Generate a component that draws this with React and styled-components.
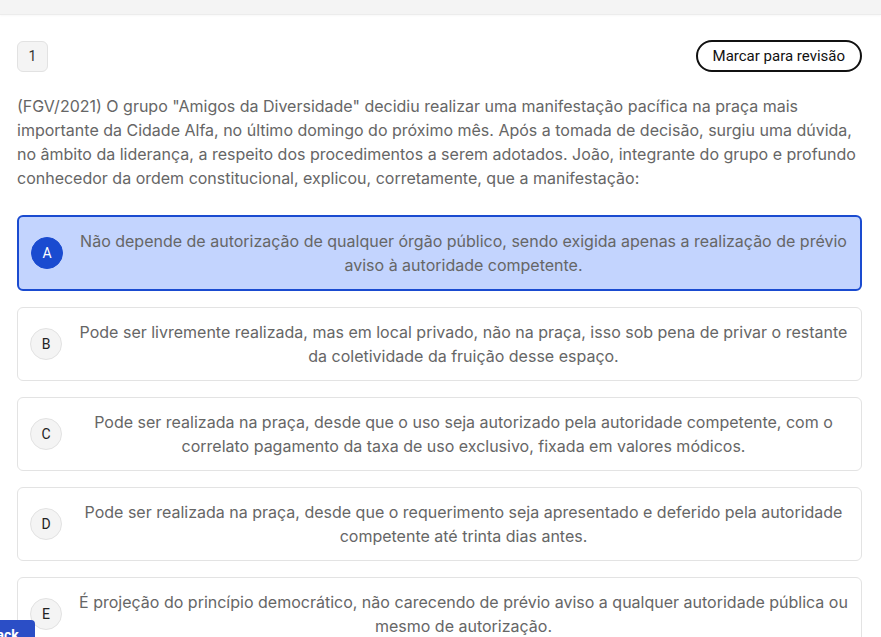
import styled, { createGlobalStyle } from 'styled-components';

const __BLUE = '#1a4bd0';
const __BLUE_LIGHT = '#c3d4fe';
const __TEXT = '#666666';
const __LINE = '#e3e3e3';

const Global = createGlobalStyle`
    html, body {
        margin:0;
        padding:0;
        overflow:hidden;
        background:#ffffff;
    }
    body {
        font-family: Inter, "Noto Sans", sans-serif;
    }
`;

const TopBar = styled.div`
    height:14px;
    background:#f4f4f4;
    border-bottom:1px solid #ececec;
    box-shadow: 0 1px 2px #00000008;
`;

const Page = styled.div`
    padding:25px 19px 0 17px;
`;

const Header = styled.div`
    display:flex;
    justify-content:space-between;
    align-items:center;
    height:32px;
`;

const NumberBadge = styled.div`
    width:29px;
    height:29px;
    box-sizing:content-box;
    display:flex;
    align-items:center;
    justify-content:center;
    background:#f4f4f4;
    border:1px solid #e2e2e2;
    border-radius:6px;
    font-family: Roboto, "Liberation Sans", sans-serif;
    font-size:14px;
    color:#333;
`;

const ReviewButton = styled.button`
    height:32px;
    padding:0 15px;
    background:#fff;
    border:2px solid #111;
    border-radius:999px;
    font-family: Roboto, "Liberation Sans", sans-serif;
    font-size:15px;
    color:#111;
    cursor:pointer;
    &:focus{
        outline:none;
    }
`;

const Statement = styled.p`
    margin:22px 0 25px 0;
    font-size:16px;
    line-height:24px;
    color:${__TEXT};
`;

const OptionList = styled.div`
    display:flex;
    flex-direction:column;
    gap:16px;
`;

const Option = styled.div`
    display:flex;
    align-items:center;
    gap:16px;
    padding:12px;
    border-radius:6px;
    border:${p => p.$selected ? `2px solid ${__BLUE}` : `1px solid ${__LINE}`};
    background:${p => p.$selected ? __BLUE_LIGHT : '#fff'};
    cursor:pointer;
`;

const Letter = styled.div`
    flex:none;
    width:30px;
    height:30px;
    border-radius:50%;
    display:flex;
    align-items:center;
    justify-content:center;
    font-family: Roboto, "Liberation Sans", sans-serif;
    font-size:14px;
    background:${p => p.$selected ? __BLUE : '#f4f4f4'};
    border:1px solid ${p => p.$selected ? __BLUE : '#e2e2e2'};
    color:${p => p.$selected ? '#fff' : '#222'};
`;

const OptionText = styled.div`
    flex:1;
    text-align:center;
    font-size:16px;
    line-height:24px;
    color:${__TEXT};
`;

const FeedbackTab = styled.div`
    position:fixed;
    left:-46px;
    bottom:-12px;
    width:81px;
    height:29px;
    background:#2b4ec6;
    border-radius:0 4px 0 0;
    color:#fff;
    font-family: Roboto, "Liberation Sans", sans-serif;
    font-weight:700;
    font-size:14px;
    line-height:30px;
    padding-left:4px;
    box-sizing:border-box;
    overflow:hidden;
`;

const options = [
    { key: 'A', text: 'Não depende de autorização de qualquer órgão público, sendo exigida apenas a realização de prévio aviso à autoridade competente.' },
    { key: 'B', text: 'Pode ser livremente realizada, mas em local privado, não na praça, isso sob pena de privar o restante da coletividade da fruição desse espaço.' },
    { key: 'C', text: 'Pode ser realizada na praça, desde que o uso seja autorizado pela autoridade competente, com o correlato pagamento da taxa de uso exclusivo, fixada em valores módicos.' },
    { key: 'D', text: 'Pode ser realizada na praça, desde que o requerimento seja apresentado e deferido pela autoridade competente até trinta dias antes.' },
    { key: 'E', text: 'É projeção do princípio democrático, não carecendo de prévio aviso a qualquer autoridade pública ou mesmo de autorização.' },
];

const App = () => {
    const selected = 'A';
    return (
        <>
            <Global />
            <TopBar />
            <Page>
                <Header>
                    <NumberBadge>1</NumberBadge>
                    <ReviewButton type='button'>Marcar para revisão</ReviewButton>
                </Header>

                <Statement>
                    (FGV/2021) O grupo "Amigos da Diversidade" decidiu realizar uma manifestação pacífica na praça mais importante da Cidade Alfa, no último domingo do próximo mês. Após a tomada de decisão, surgiu uma dúvida, no âmbito da liderança, a respeito dos procedimentos a serem adotados. João, integrante do grupo e profundo conhecedor da ordem constitucional, explicou, corretamente, que a manifestação:
                </Statement>

                <OptionList>
                    {options.map(o => (
                        <Option key={o.key} $selected={o.key === selected}>
                            <Letter $selected={o.key === selected}>{o.key}</Letter>
                            <OptionText>{o.text}</OptionText>
                        </Option>
                    ))}
                </OptionList>
            </Page>
            <FeedbackTab>Feedback</FeedbackTab>
        </>
    );
}

export default App;
